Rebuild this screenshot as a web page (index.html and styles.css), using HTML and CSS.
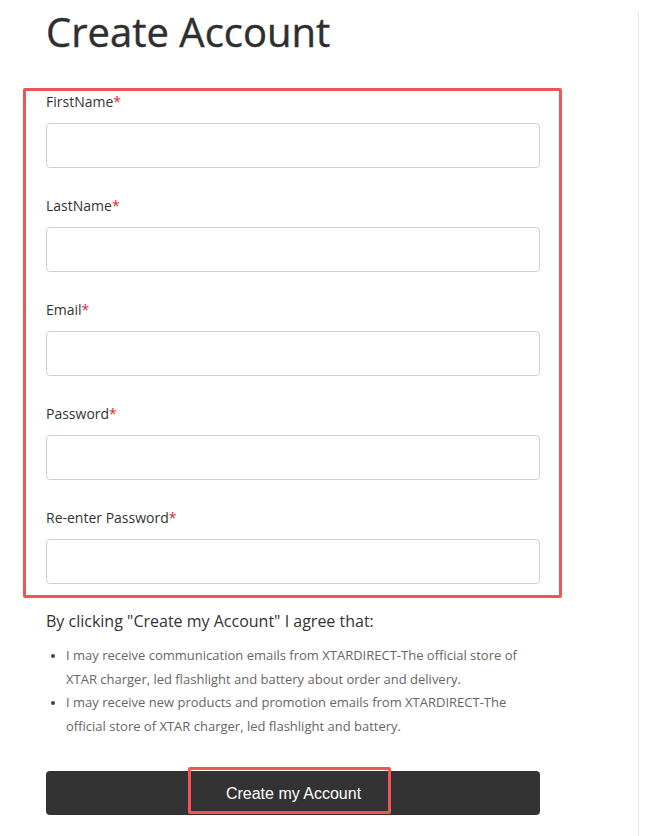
FILE: index.html
```html
<!DOCTYPE html>
<html lang="en">
<head>
<meta charset="utf-8">
<title>Create Account</title>
<link rel="stylesheet" href="styles.css">
</head>
<body>
<div class="page">
  <main class="main">
    <h1 class="title">Create Account</h1>
    <form class="form">
      <div class="highlight">
        <div class="field">
          <label class="label">FirstName<span class="req">*</span></label>
          <input class="input" type="text">
        </div>
        <div class="field">
          <label class="label">LastName<span class="req">*</span></label>
          <input class="input" type="text">
        </div>
        <div class="field">
          <label class="label">Email<span class="req">*</span></label>
          <input class="input" type="text">
        </div>
        <div class="field">
          <label class="label">Password<span class="req">*</span></label>
          <input class="input" type="password">
        </div>
        <div class="field">
          <label class="label">Re-enter Password<span class="req">*</span></label>
          <input class="input" type="password">
        </div>
      </div>
      <div class="terms">
        <p class="agree">By clicking "Create my Account" I agree that:</p>
        <ul class="list">
          <li>I may receive communication emails from XTARDIRECT-The official store of XTAR charger, led flashlight and battery about order and delivery.</li>
          <li>I may receive new products and promotion emails from XTARDIRECT-The official store of XTAR charger, led flashlight and battery.</li>
        </ul>
        <button class="submit" type="button"><span class="submit-text">Create my Account</span></button>
      </div>
    </form>
  </main>
  <aside class="aside"></aside>
</div>
</body>
</html>
```
FILE: styles.css
```css
* { box-sizing: border-box; }
html, body { margin: 0; padding: 0; background: #fff; }
body { font-family: "Open Sans", "Noto Sans", sans-serif; color: #333; }

.page { display: flex; width: 645px; min-height: 836px; }
.main { width: 638px; flex: none; padding-left: 23px; }
.aside { flex: 1; margin-top: 12px; border-left: 1px solid #e6e6e6; }

.title {
  margin: 9px 0 0 23px;
  font-size: 40px;
  line-height: 46px;
  font-weight: 400;
  color: #2f2f2f;
  -webkit-text-stroke: 0.4px #2f2f2f;
}

.form { margin-top: 33px; width: 539px; }

.highlight {
  border: 3px solid #f25454;
  border-radius: 2px;
  padding: 1px 19px 11px 20px;
  display: flex;
  flex-direction: column;
  gap: 28px;
}

.field { display: flex; flex-direction: column; }
.label { font-size: 14px; line-height: 20px; color: #333; }
.req { color: #e8262b; }
.input {
  margin-top: 11px;
  height: 45px;
  width: 494px;
  border: 1px solid #cfcfcf;
  border-radius: 4px;
  background: #fff;
  font: inherit;
}

.terms { padding-left: 23px; }
.agree { margin: 11px 0 0; font-size: 16px; line-height: 24px; color: #333; }
.list {
  margin: 11px 0 0;
  padding-left: 20px;
  width: 494px;
  font-size: 13px;
  line-height: 23.7px;
  color: #6b6461;
}
.list li::marker { color: #444; font-size: 12px; }

.submit {
  margin-top: 32px;
  width: 494px;
  height: 44px;
  border: none;
  border-radius: 4px;
  background: #333;
  padding: 0;
  display: flex;
  justify-content: center;
  align-items: flex-start;
  cursor: pointer;
}
.submit-text {
  margin: -4px 7px 0 0;
  height: 47px;
  padding: 8px 27px 0 35px;
  border: 3px solid #f25454;
  border-radius: 2px;
  display: flex;
  align-items: center;
  font-family: "Liberation Sans", Arial, sans-serif;
  font-size: 16px;
  color: #fff;
}
```
